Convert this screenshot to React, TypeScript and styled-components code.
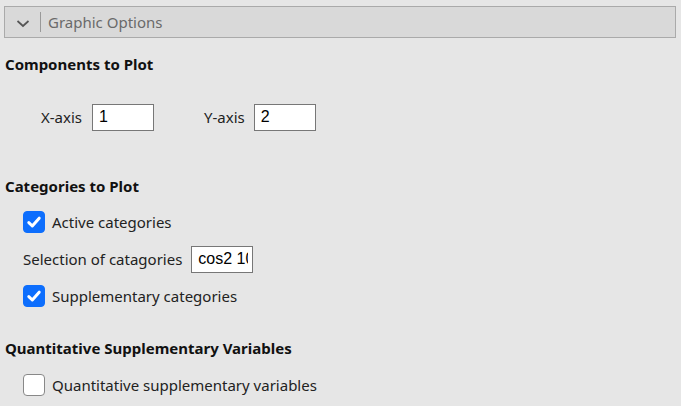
import React from "react";
import styled, { createGlobalStyle } from "styled-components";

const Global = createGlobalStyle`
  html, body { margin: 0; padding: 0; background: #e6e6e6; }
  body { font-family: "Noto Sans", "Open Sans", sans-serif; color: #222; }
`;

const Page = styled.div`
  padding: 6px 5px 0 4px;
  display: flex;
  flex-direction: column;
`;

const Header = styled.div`
  height: 30px;
  background: #d9d9d9;
  border: 1px solid #aaaaaa;
  display: flex;
  align-items: center;
  padding-left: 11px;
`;

const Chevron = styled.svg`
  width: 14px;
  height: 14px;
  margin-top: 2px;
`;

const Sep = styled.div`
  width: 1px;
  height: 20px;
  background: #999;
  margin: 0 7px 0 10px;
`;

const HeaderTitle = styled.span`
  font-size: 15px;
  color: #6a6a6a;
`;

const SectionTitle = styled.div<{ $top: number }>`
  font-weight: 700;
  font-size: 15px;
  color: #111;
  margin-top: ${(p) => p.$top}px;
  padding-left: 1px;
  line-height: 20px;
`;

const AxisRow = styled.div`
  display: flex;
  align-items: center;
  margin-top: 30px;
  padding-left: 37px;
  height: 26px;
`;

const AxisGroup = styled.div<{ $w: number; $gap: number }>`
  display: flex;
  align-items: center;
  gap: ${(p) => p.$gap}px;
  width: ${(p) => p.$w}px;
`;

const Label = styled.span`
  font-size: 15px;
  color: #222;
`;

const TextInput = styled.input`
  box-sizing: border-box;
  width: 62px;
  height: 27px;
  border: 1px solid #777;
  border-radius: 0;
  background: #fff;
  padding: 0 4px 0 6px;
  font-family: "Liberation Sans", Arial, sans-serif;
  font-size: 16px;
  color: #000;
  outline: none;
`;

const Options = styled.div<{ $top: number }>`
  display: flex;
  flex-direction: column;
  padding-left: 19px;
  gap: 13px;
  margin-top: ${(p) => p.$top}px;
`;

const CheckRow = styled.label`
  display: flex;
  align-items: center;
  gap: 7px;
  height: 22px;
`;

const Box = styled.span<{ $on: boolean }>`
  box-sizing: border-box;
  width: 22px;
  height: 22px;
  border-radius: 4px;
  background: ${(p) => (p.$on ? "#0d6efd" : "#fff")};
  border: 1px solid ${(p) => (p.$on ? "#0d6efd" : "#888")};
  display: flex;
  align-items: center;
  justify-content: center;
`;

const SelRow = styled.div`
  display: flex;
  align-items: center;
  gap: 9px;
  height: 26px;
`;

const Check = ({ on, label }: { on: boolean; label: string }) => (
  <CheckRow>
    <Box $on={on}>
      {on && (
        <svg width="16" height="16" viewBox="0 0 16 16">
          <path d="M2.8 8.6 L6.3 12 L13.2 4.2" fill="none" stroke="#fff" strokeWidth="3" strokeLinecap="round" strokeLinejoin="round" />
        </svg>
      )}
    </Box>
    <Label>{label}</Label>
  </CheckRow>
);

export default function App() {
  return (
    <>
      <Global />
      <Page>
        <Header>
          <Chevron viewBox="0 0 14 14">
            <path d="M1.5 5 L7 10 L12.5 5" fill="none" stroke="#555" strokeWidth="1.7" />
          </Chevron>
          <Sep />
          <HeaderTitle>Graphic Options</HeaderTitle>
        </Header>
        <SectionTitle $top={16}>Components to Plot</SectionTitle>
        <AxisRow>
          <AxisGroup $w={163} $gap={10}>
            <Label>X-axis</Label>
            <TextInput defaultValue="1" />
          </AxisGroup>
          <AxisGroup $w={120} $gap={9}>
            <Label>Y-axis</Label>
            <TextInput defaultValue="2" />
          </AxisGroup>
        </AxisRow>
        <SectionTitle $top={46}>Categories to Plot</SectionTitle>
        <Options $top={15}>
          <Check on={true} label="Active categories" />
          <SelRow>
            <Label>Selection of catagories</Label>
            <TextInput defaultValue="cos2 10" />
          </SelRow>
          <Check on={true} label="Supplementary categories" />
        </Options>
        <SectionTitle $top={31}>Quantitative Supplementary Variables</SectionTitle>
        <Options $top={16}>
          <Check on={false} label="Quantitative supplementary variables" />
        </Options>
      </Page>
    </>
  );
}
